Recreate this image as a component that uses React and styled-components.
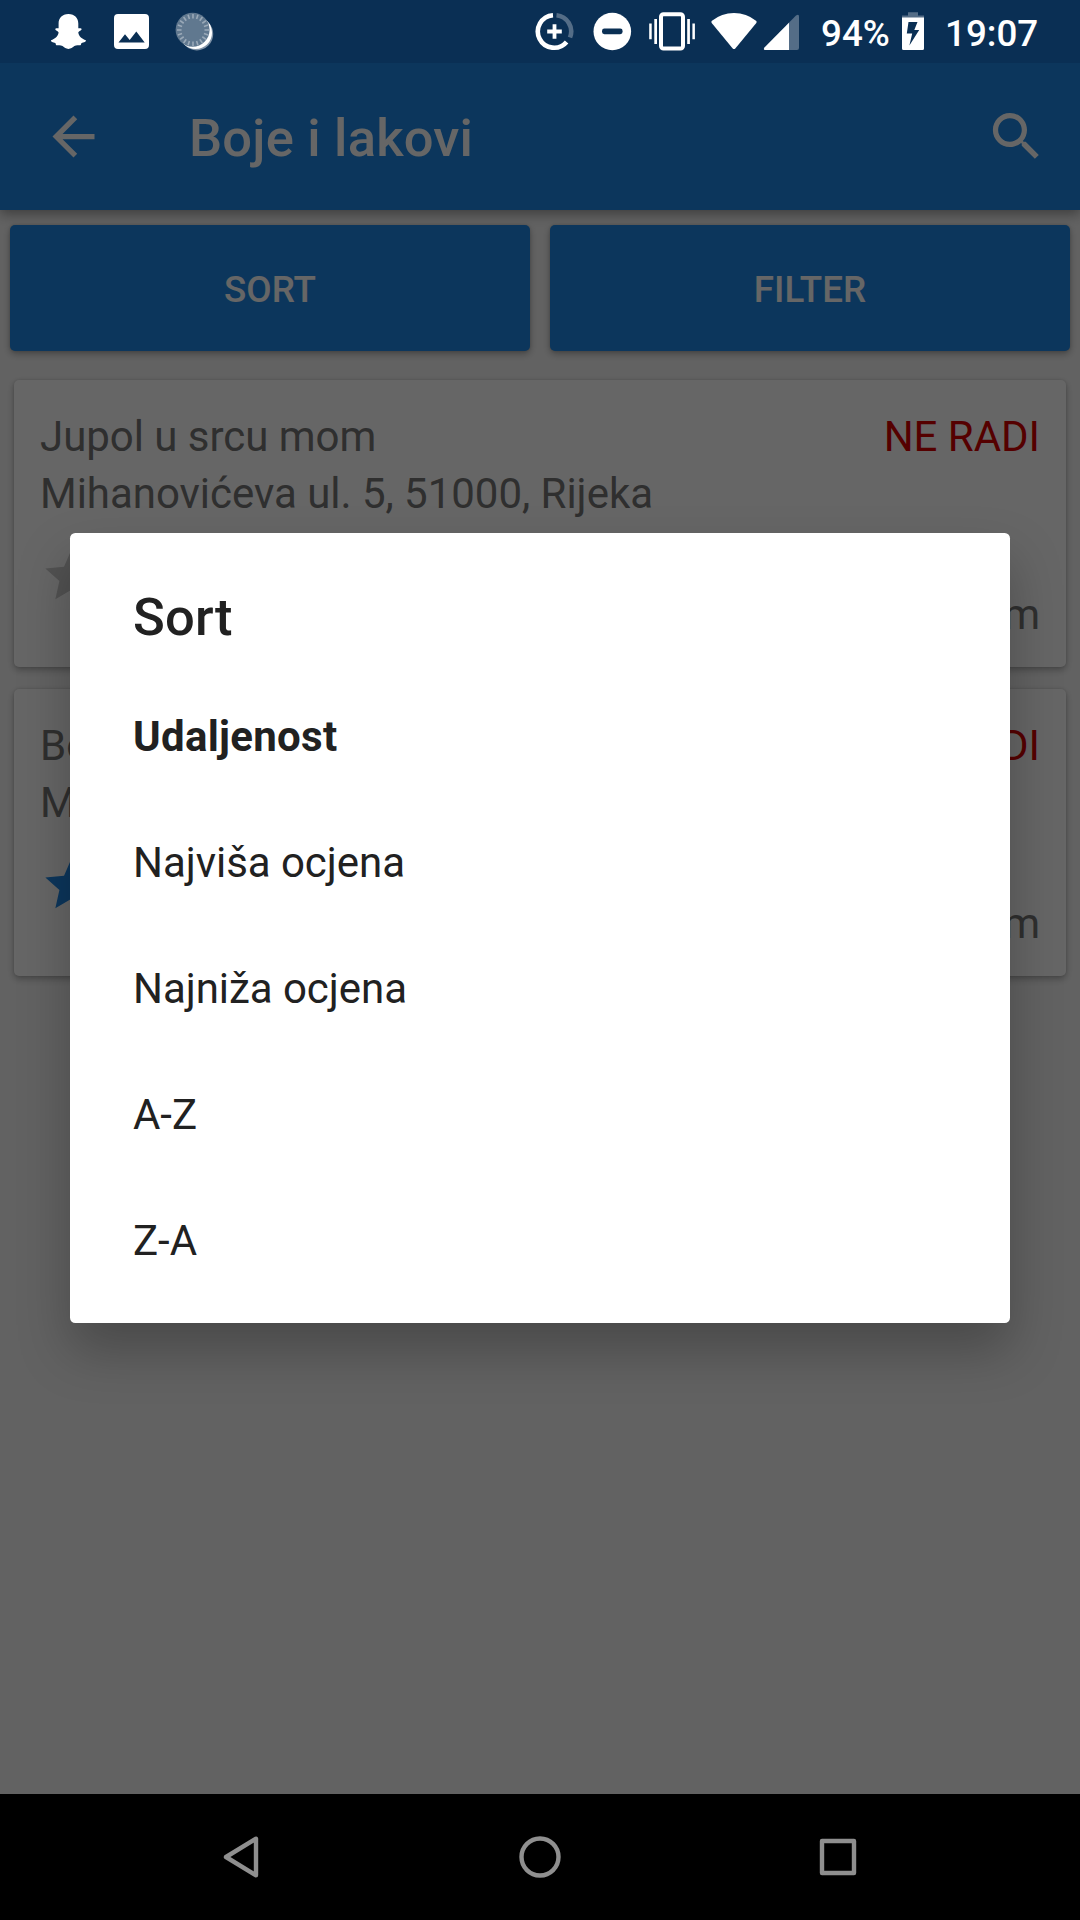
import React from 'react';
import styled, { createGlobalStyle } from 'styled-components';

const GlobalStyle = createGlobalStyle`
  *, *::before, *::after { box-sizing: border-box; }
  html, body { margin: 0; padding: 0; background: #000; }
`;

const Screen = styled.div`
  display: flex;
  flex-direction: column;
  width: 1080px;
  height: 1920px;
  overflow: hidden;
  font-family: Roboto, 'Noto Sans', sans-serif;
`;

const StatusBar = styled.header`
  display: flex;
  align-items: center;
  justify-content: space-between;
  flex: none;
  height: 63px;
  padding: 0 43px 0 50px;
  background: #0a2f54;
  color: #fff;
`;

const StatusGroup = styled.div`
  display: flex;
  align-items: center;
  height: 63px;
`;

const Glyph = styled.svg`
  display: block;
  flex: none;
  width: ${(p) => p.$width}px;
  height: 63px;
  margin-left: ${(p) => p.$gap || 0}px;
  fill: #fff;
`;

const StatusText = styled.span`
  width: ${(p) => p.$width}px;
  margin-left: ${(p) => p.$gap}px;
  font-size: 36.75px;
  font-weight: 500;
  line-height: 43px;
  white-space: nowrap;
  padding-top: 3px;
`;

const Body = styled.div`
  position: relative;
  display: flex;
  flex-direction: column;
  flex: 1;
  background: #f5f5f5;
  overflow: hidden;
`;

const AppBar = styled.div`
  display: flex;
  align-items: center;
  flex: none;
  height: 147px;
  padding: 0 32px 0 42px;
  background: #1e88e5;
  color: #fff;
  box-shadow: 0 4px 12px rgba(0, 0, 0, 0.38);
`;

const Icon = styled.svg`
  display: block;
  width: 63px;
  height: 63px;
  fill: currentColor;
`;

const Title = styled.h1`
  flex: 1;
  margin: 0 0 0 84px;
  padding-top: 3px;
  font-size: 52.5px;
  font-weight: 500;
  line-height: 62px;
  letter-spacing: 0.2px;
`;

const Actions = styled.div`
  display: grid;
  grid-template-columns: 1fr 1fr;
  gap: 20px;
  padding: 15px 10px 29px;
`;

const ActionButton = styled.button`
  height: 126px;
  padding: 2px 0 0;
  border: 0;
  border-radius: 5px;
  background: #1e88e5;
  color: #fff;
  font: 500 36.75px/43px Roboto, sans-serif;
  text-transform: uppercase;
  box-shadow: 0 3px 7px rgba(0, 0, 0, 0.3), 0 0 3px rgba(0, 0, 0, 0.15);
`;

const List = styled.div`
  display: flex;
  flex-direction: column;
  gap: 22px;
  padding: 0 14px;
`;

const Card = styled.article`
  display: flex;
  justify-content: space-between;
  height: 287px;
  padding: 32px 26px 28px;
  border-radius: 5px;
  background: #fff;
  color: #757575;
  font-size: 42px;
  line-height: 49px;
  letter-spacing: -0.03px;
  box-shadow: 0 3px 7px rgba(0, 0, 0, 0.28), 0 0 3px rgba(0, 0, 0, 0.12);
`;

const CardInfo = styled.div`
  display: flex;
  flex-direction: column;
  gap: 8px;
`;

const CardSide = styled.div`
  display: flex;
  flex-direction: column;
  justify-content: space-between;
  align-items: flex-end;
`;

const Closed = styled.span`
  color: #d50000;
`;

const Distance = styled.span`
  white-space: nowrap;
`;

const Stars = styled.svg`
  display: block;
  width: 320px;
  height: 64px;
  margin-top: 19px;
  fill: ${(p) => p.$color};
`;

const Scrim = styled.div`
  position: absolute;
  inset: 0;
  padding: 470px 0 0 70px;
  background: rgba(0, 0, 0, 0.6);
`;

const Dialog = styled.section`
  width: 939.5px;
  height: 789.5px;
  padding: 53px 63px 0;
  border-radius: 5.25px;
  background: #fff;
  color: #212121;
  box-shadow: 0 27px 52px rgba(0, 0, 0, 0.26);
`;

const DialogTitle = styled.h2`
  margin: 0;
  height: 87px;
  font-size: 52.5px;
  font-weight: 500;
  line-height: 62px;
  letter-spacing: 0.2px;
`;

const Option = styled.div`
  display: flex;
  align-items: center;
  height: 126px;
  font-size: 42px;
  font-weight: ${(p) => (p.$selected ? 700 : 400)};
  letter-spacing: ${(p) => (p.$selected ? '0.28px' : '-0.05px')};
  line-height: 49px;
`;

const NavBar = styled.nav`
  display: flex;
  align-items: center;
  justify-content: space-between;
  flex: none;
  height: 126px;
  padding: 0 212px;
  background: #000;
`;

const NavIcon = styled.svg`
  display: block;
  width: 60px;
  height: 60px;
  fill: none;
  stroke: #8f8f8f;
  stroke-width: 4.4;
  stroke-linejoin: round;
`;

const starPoints = (cx) =>
  Array.from({ length: 10 }, (_, i) => {
    const r = i % 2 ? 12.7 : 27.5;
    const a = (Math.PI / 5) * i - Math.PI / 2;
    return `${(cx + r * Math.cos(a)).toFixed(2)},${(32 + r * Math.sin(a)).toFixed(2)}`;
  }).join(' ');

const Rating = ({ color }) => (
  <Stars $color={color} viewBox="0 0 320 64">
    {[31.5, 94.5, 157.5, 220.5, 283.5].map((cx) => (
      <polygon key={cx} points={starPoints(cx)} />
    ))}
  </Stars>
);

const ticks = Array.from({ length: 20 }, (_, i) => {
  const a = (Math.PI * i) / 10;
  return [193 + 11.5 * Math.cos(a), 30 + 11.5 * Math.sin(a), 193 + 16 * Math.cos(a), 30 + 16 * Math.sin(a)];
});

const options = ['Udaljenost', 'Najviša ocjena', 'Najniža ocjena', 'A-Z', 'Z-A'];

const shops = [
  { name: 'Jupol u srcu mom', address: 'Mihanovićeva ul. 5, 51000, Rijeka', star: '#cccccc' },
  { name: 'Boje', address: 'M', star: '#1e88e5' },
];

export default function App() {
  return (
    <Screen>
      <GlobalStyle />
      <StatusBar>
        <StatusGroup>
          <Glyph $width={37} viewBox="50 0 37 63">
            <path d="M68.4 14C62 14 58.6 18.300 58.600 23.500V28.300C57.400 28.600 55.600 27.600 55.300 28.900C55 30.400 58.700 31 58.600 32.600C58 36.500 54.500 39.300 51.100 40.300C50.200 41.600 53.300 42.500 55.300 43C55.900 43.500 55.600 45 56.500 45.300C58.300 45.500 60.500 44.800 62.500 46C64.300 47.200 66 48.900 68.400 48.900C70.900 48.900 72.600 47.200 74.400 46C76.400 44.800 78.600 45.500 80.300 45.300C81.200 45 81 43.500 81.600 43C83.600 42.500 86.700 41.600 85.800 40.300C82.300 39.300 78.800 36.500 78.300 32.600C78.200 31 81.900 30.400 81.600 28.900C81.200 27.600 79.500 28.600 78.300 28.300V23.500C78.300 18.300 74.900 14 68.400 14Z" />
          </Glyph>
          <Glyph $width={36} $gap={27} viewBox="114 0 36 63">
            <path
              fillRule="evenodd"
              d="M118 14H145Q149 14 149 18V45Q149 49 145 49H118Q114 49 114 45V18Q114 14 118 14ZM118.500 42.600H144.700L136.300 31.500L129.700 40L125 34.200Z"
            />
          </Glyph>
          <Glyph $width={40} $gap={25} viewBox="175 0 40 63">
            <circle cx="196.800" cy="34" r="16.400" fill="#8194a8" />
            <circle cx="195.600" cy="32.700" r="16.400" />
            <circle cx="192.600" cy="29.700" r="17" fill="#60788f" />
            {ticks.map(([x1, y1, x2, y2]) => (
              <line key={`${x1}-${y1}`} x1={x1} y1={y1} x2={x2} y2={y2} stroke="#9aa9b8" strokeWidth="1.600" />
            ))}
          </Glyph>
        </StatusGroup>
        <StatusGroup>
          <Glyph $width={40} viewBox="535 0 40 63">
            <g fill="none" stroke="#fff" strokeWidth="4.600">
              <path d="M553 15.200A16.300 16.300 0 1 0 566.600 42" />
              <path d="M556.500 15.200A16.300 16.300 0 0 1 570 37.500" stroke="#546d87" />
              <path d="M554.500 24.200V38.800M547.200 31.500H561.800" strokeWidth="3.800" />
            </g>
          </Glyph>
          <Glyph $width={40} $gap={17} viewBox="592 0 40 63">
            <circle cx="612.300" cy="31.500" r="18.800" />
            <rect x="602" y="28.600" width="20.600" height="5.600" rx="2.400" fill="#0a2f54" />
          </Glyph>
          <Glyph $width={48} $gap={16} viewBox="648 0 48 63">
            <rect x="661" y="14.200" width="22" height="34.400" rx="2.500" fill="none" stroke="#fff" strokeWidth="4" />
            <path d="M649.200 23.500H651.700V39.300H649.200ZM654.300 19H657V44H654.300ZM687.200 19H689.900V44H687.200ZM692.400 23.500H694.900V39.300H692.400Z" />
          </Glyph>
          <Glyph $width={48} $gap={14} viewBox="710 0 48 63">
            <path d="M732.500 48.200L711.700 23Q710.800 21.800 712 20.800Q721.500 13 734 13Q746.500 13 756 20.800Q757.200 21.800 756.300 23L735.500 48.200Q734 50 732.500 48.200Z" />
          </Glyph>
          <Glyph $width={37} $gap={5} viewBox="763 0 37 63">
            <path d="M765.300 50Q762.800 50 764.500 47.500L796 15.600Q799 13.500 799 16.500V48Q799 50 797 50Z" fill="#546d87" />
            <path d="M765.300 50Q762.800 50 764.500 47.500L789 22.700V50Z" />
          </Glyph>
          <StatusText $width={70} $gap={21}>94%</StatusText>
          <Glyph $width={24} $gap={10} viewBox="901 0 24 63">
            <path d="M908 12.300H918V15.600H924V18H902V15.600H908Z" fill="#546d87" />
            <path
              fillRule="evenodd"
              d="M902 17.600H924V48.500Q924 50 922.500 50H903.500Q902 50 902 48.500ZM908.500 22L906.800 33.600H912.200L909.400 45.500L919.200 29.900H914.300L917.500 22Z"
            />
          </Glyph>
          <StatusText $width={92} $gap={20}>19:07</StatusText>
        </StatusGroup>
      </StatusBar>

      <Body>
        <AppBar>
          <Icon viewBox="0 0 24 24">
            <path d="M20 11H7.830l5.590-5.590L12 4l-8 8 8 8 1.410-1.410L7.830 13H20v-2z" />
          </Icon>
          <Title>Boje i lakovi</Title>
          <Icon viewBox="0 0 24 24">
            <path d="M15.500 14h-.79l-.28-.27C15.410 12.590 16 11.110 16 9.500 16 5.910 13.090 3 9.500 3S3 5.910 3 9.500 5.910 16 9.500 16c1.610 0 3.090-.59 4.230-1.570l.27.280v.79l5 4.990L20.490 19l-4.990-5zm-6 0C7.010 14 5 11.990 5 9.500S7.010 5 9.500 5 14 7.010 14 9.500 11.990 14 9.500 14z" />
          </Icon>
        </AppBar>
        <Actions>
          <ActionButton>Sort</ActionButton>
          <ActionButton>Filter</ActionButton>
        </Actions>
        <List>
          {shops.map((shop) => (
            <Card key={shop.name}>
              <CardInfo>
                <span>{shop.name}</span>
                <span>{shop.address}</span>
                <Rating color={shop.star} />
              </CardInfo>
              <CardSide>
                <Closed>NE RADI</Closed>
                <Distance>km</Distance>
              </CardSide>
            </Card>
          ))}
        </List>
        <Scrim>
          <Dialog role="dialog">
            <DialogTitle>Sort</DialogTitle>
            {options.map((label, i) => (
              <Option key={label} $selected={i === 0}>
                {label}
              </Option>
            ))}
          </Dialog>
        </Scrim>
      </Body>

      <NavBar>
        <NavIcon viewBox="0 0 60 60">
          <path d="M44 11.700V48.300L14 30Z" />
        </NavIcon>
        <NavIcon viewBox="0 0 60 60">
          <circle cx="30" cy="30" r="18.500" />
        </NavIcon>
        <NavIcon viewBox="0 0 60 60">
          <rect x="14" y="14" width="32" height="32" />
        </NavIcon>
      </NavBar>
    </Screen>
  );
}
